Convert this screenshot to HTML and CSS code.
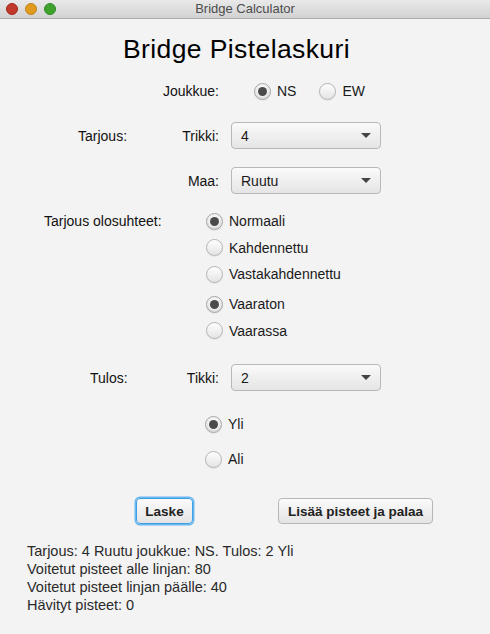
FILE: index.html
```html
<!DOCTYPE html>
<html lang="fi">
<head>
<meta charset="utf-8">
<title>Bridge Calculator</title>
<link rel="stylesheet" href="styles.css">
</head>
<body>
<div class="titlebar">
  <div class="lights">
    <span class="light red"></span>
    <span class="light yellow"></span>
    <span class="light green"></span>
  </div>
  <div class="title">Bridge Calculator</div>
  <div></div>
</div>
<main class="content">
  <h1 class="heading">Bridge Pistelaskuri</h1>

  <div class="row row-team">
    <div class="label-right team-label">Joukkue:</div>
    <div class="radio-inline">
      <div class="radio checked"><span class="dot"></span><span>NS</span></div>
      <div class="radio"><span class="dot"></span><span>EW</span></div>
    </div>
  </div>

  <div class="row row-combo row-trikki">
    <div class="label-left pad-tarjous">Tarjous:</div>
    <div class="label-right sub-label">Trikki:</div>
    <div class="combo"><span>4</span><span class="arrow"></span></div>
  </div>

  <div class="row row-combo row-maa">
    <div class="label-left pad-tarjous"></div>
    <div class="label-right sub-label">Maa:</div>
    <div class="combo"><span>Ruutu</span><span class="arrow"></span></div>
  </div>

  <div class="row-cond">
    <div class="cond-label">Tarjous olosuhteet:</div>
    <div class="radio-stack">
      <div class="radio-group">
        <div class="radio row-radio checked"><span class="dot"></span><span>Normaali</span></div>
        <div class="radio row-radio"><span class="dot"></span><span>Kahdennettu</span></div>
        <div class="radio row-radio"><span class="dot"></span><span>Vastakahdennettu</span></div>
      </div>
      <div class="radio-group group-vuln">
        <div class="radio row-radio checked"><span class="dot"></span><span>Vaaraton</span></div>
        <div class="radio row-radio"><span class="dot"></span><span>Vaarassa</span></div>
      </div>
    </div>
  </div>

  <div class="row row-combo row-tulos">
    <div class="label-left pad-tulos">Tulos:</div>
    <div class="label-right sub-label">Tikki:</div>
    <div class="combo"><span>2</span><span class="arrow"></span></div>
  </div>

  <div class="result-radios">
    <div class="radio row-radio checked"><span class="dot"></span><span>Yli</span></div>
    <div class="radio row-radio ali"><span class="dot"></span><span>Ali</span></div>
  </div>

  <div class="buttons">
    <button class="btn btn-focus">Laske</button>
    <button class="btn btn-add">Lisää pisteet ja palaa</button>
  </div>

  <div class="summary">
    <div>Tarjous: 4 Ruutu joukkue: NS. Tulos: 2 Yli</div>
    <div>Voitetut pisteet alle linjan: 80</div>
    <div>Voitetut pisteet linjan päälle: 40</div>
    <div>Hävityt pisteet: 0</div>
  </div>
</main>
</body>
</html>
```

FILE: styles.css
```css
* { box-sizing: border-box; }

html, body {
  margin: 0;
  padding: 0;
}

body {
  background: #f3f3f3;
  font-family: "Liberation Sans", Arial, sans-serif;
  font-size: 14px;
  color: #111;
  width: 490px;
  height: 634px;
  overflow: hidden;
}

/* Title bar */
.titlebar {
  height: 19px;
  display: grid;
  grid-template-columns: 1fr auto 1fr;
  align-items: center;
  background: linear-gradient(#e9e9e9, #d2d2d2);
  border-bottom: 1px solid #acacac;
}

.lights {
  display: flex;
  gap: 7px;
  padding-left: 6px;
}

.light {
  width: 12px;
  height: 12px;
  border-radius: 50%;
  display: block;
}
.light.red { background: #c0392b; border: 1px solid #a5281c; }
.light.yellow { background: #e09b1f; border: 1px solid #c2831a; }
.light.green { background: #3ea22c; border: 1px solid #2f8a22; }

.title {
  font-size: 13px;
  color: #4d4d4d;
  line-height: 18px;
}

/* Content */
.content {
  display: flex;
  flex-direction: column;
}

.heading {
  margin: 15px 0 0;
  padding-right: 17px;
  font-size: 26.5px;
  font-weight: normal;
  line-height: 30px;
  text-align: center;
  color: #000;
  letter-spacing: 0.4px;
}

.row {
  display: flex;
  align-items: center;
}

.row-team {
  margin-top: 13px;
  height: 28px;
}

.team-label {
  width: 219px;
}

.label-right { text-align: right; }
.label-left { text-align: left; }

.radio-inline {
  display: flex;
  gap: 23px;
  margin-left: 35px;
}

.radio {
  display: flex;
  align-items: center;
  gap: 6px;
  color: #1a1a1a;
}

.dot {
  width: 17px;
  height: 17px;
  border-radius: 50%;
  border: 1px solid #b4b4b4;
  background: linear-gradient(#fefefe, #e4e4e4);
  box-shadow: 0 1px 1px rgba(0,0,0,0.06);
  display: flex;
  align-items: center;
  justify-content: center;
  flex: none;
}

.radio.checked .dot {
  border-color: #a5a5a5;
  background: linear-gradient(#f4f4f4, #dcdcdc);
}

.radio.checked .dot::after {
  content: "";
  width: 9px;
  height: 9px;
  border-radius: 50%;
  background: #4b4b4b;
  box-shadow: 0 0 0 1px rgba(255,255,255,0.6);
}

.row-combo { height: 27px; }
.row-trikki { margin-top: 17px; }
.row-maa { margin-top: 18px; }
.row-tulos { margin-top: 20px; }

.pad-tarjous { width: 150px; padding-left: 78px; }
.pad-tulos { width: 150px; padding-left: 90px; }

.sub-label { width: 69px; }

.combo {
  margin-left: 12px;
  width: 150px;
  height: 27px;
  border: 1px solid #b8b8b8;
  border-radius: 4px;
  background: linear-gradient(#fafafa, #e5e5e5);
  display: flex;
  align-items: center;
  justify-content: space-between;
  padding: 0 9px 0 9px;
  color: #1a1a1a;
}

.arrow {
  width: 0;
  height: 0;
  border-left: 5px solid transparent;
  border-right: 5px solid transparent;
  border-top: 5px solid #444;
}

/* Conditions */
.row-cond {
  display: flex;
  align-items: flex-start;
  margin-top: 14px;
}

.cond-label {
  width: 206px;
  padding-left: 44px;
  line-height: 26.5px;
}

.radio-stack {
  display: flex;
  flex-direction: column;
  gap: 3.5px;
}

.row-radio { height: 26.5px; }

.result-radios {
  display: flex;
  flex-direction: column;
  padding-left: 205px;
  margin-top: 20px;
}

.result-radios .row-radio { height: 26px; }
.result-radios .ali { margin-top: 9px; }

/* Buttons */
.buttons {
  display: flex;
  align-items: center;
  gap: 85px;
  padding-left: 136px;
  margin-top: 26px;
}

.btn {
  height: 26px;
  font-family: "Liberation Sans", Arial, sans-serif;
  font-size: 13.5px;
  font-weight: bold;
  color: #222;
  border: 1px solid #b6b6b6;
  border-radius: 4px;
  background: linear-gradient(#fbfbfb, #e4e4e4);
  padding: 0 6px;
  margin: 0;
}

.btn-focus {
  width: 57px;
  border-color: #3d9ee6;
  box-shadow: 0 0 0 1.5px #6ab8f0;
}

.btn-add { width: 155px; }

/* Summary */
.summary {
  margin-top: 18px;
  padding-left: 27px;
  font-size: 14.5px;
  line-height: 18px;
  color: #2a2a2a;
}
```
